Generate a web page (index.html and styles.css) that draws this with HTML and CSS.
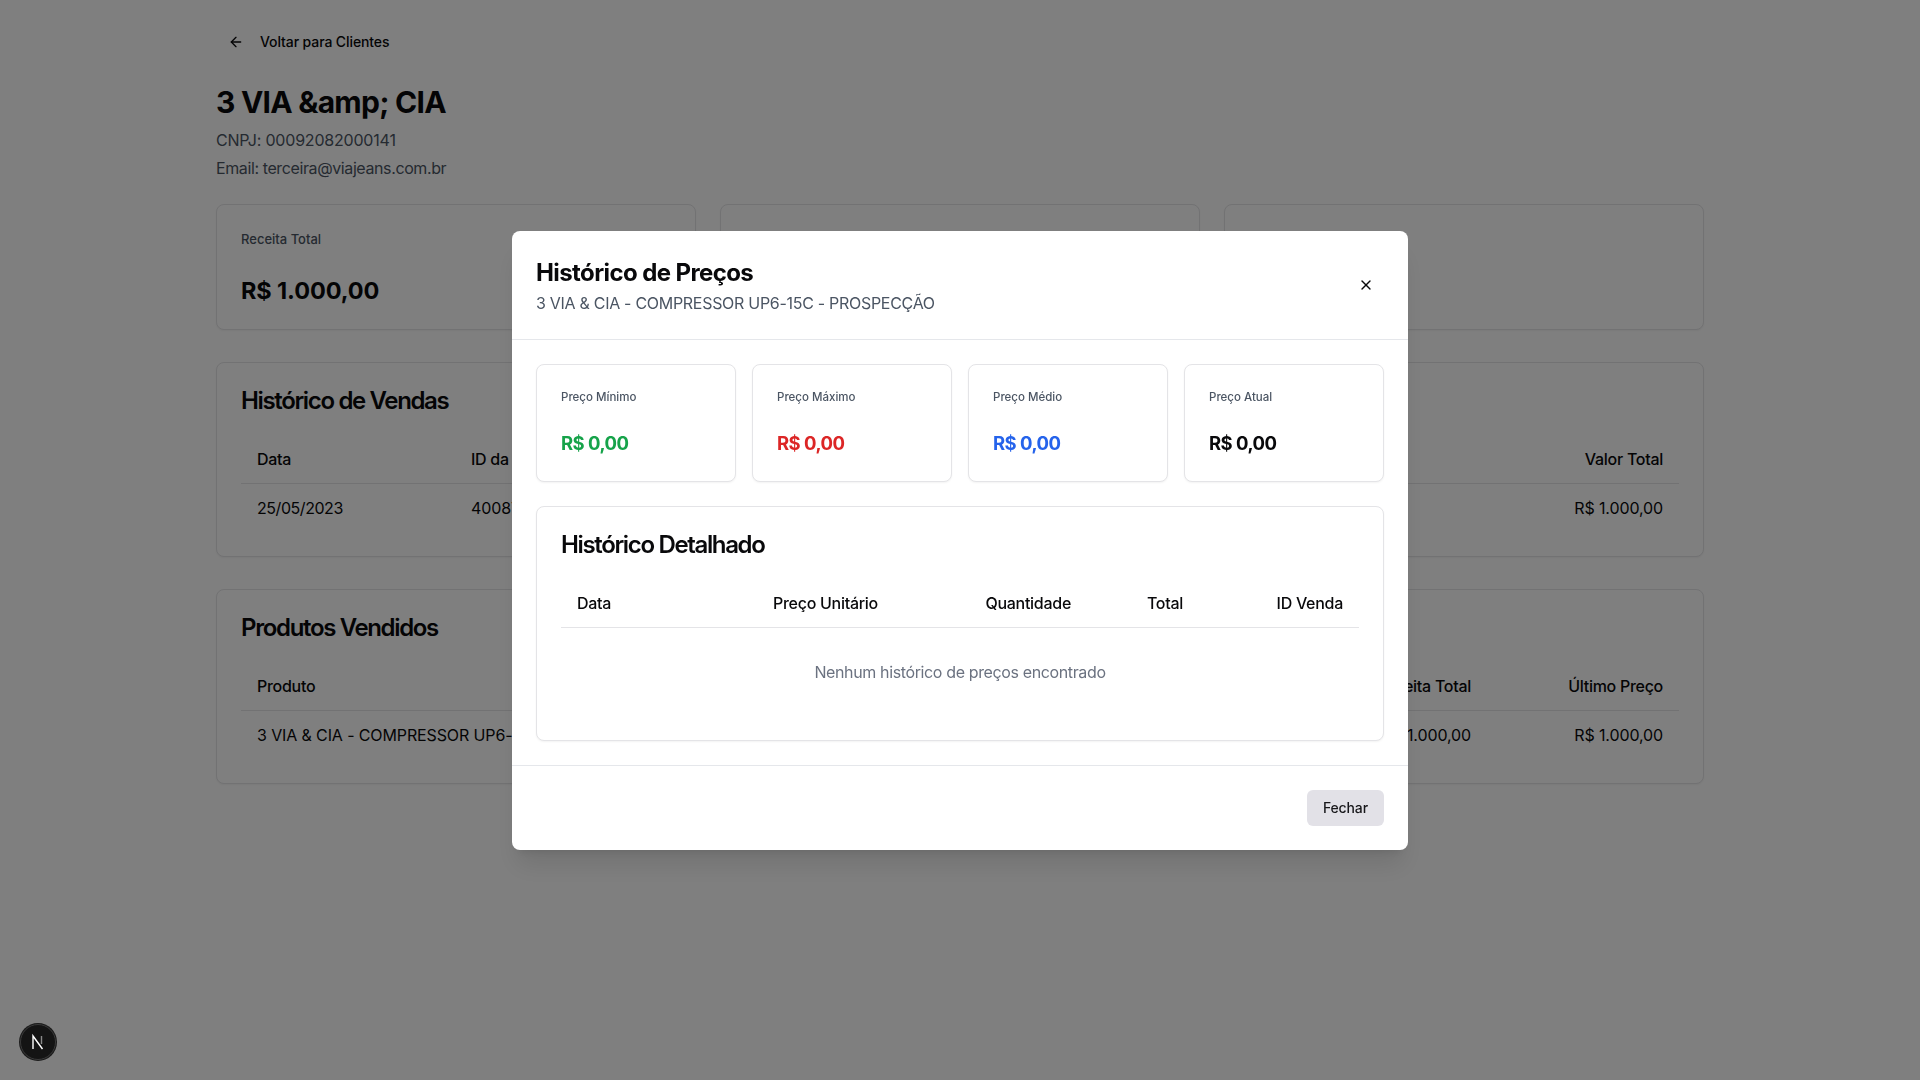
FILE: index.html
```html
<!DOCTYPE html>
<html lang="pt-BR">
<head>
    <meta charset="UTF-8">
    <meta name="viewport" content="width=device-width, initial-scale=1.0">
    <title>3 VIA &amp; CIA</title>
    <link rel="stylesheet" href="styles.css">
</head>
<body>
    <main class="container">
        <a class="back-link" href="#">
            <svg class="icon" viewBox="0 0 24 24"><path d="m12 19-7-7 7-7"/><path d="M19 12H5"/></svg>
            Voltar para Clientes
        </a>

        <header class="client-header">
            <h1>3 VIA &amp;amp; CIA</h1>
            <p class="cnpj">CNPJ: 00092082000141</p>
            <p>Email: terceira@viajeans.com.br</p>
        </header>

        <section class="stats">
            <div class="card stat">
                <div class="stat-label">Receita Total</div>
                <div class="stat-value">R$ 1.000,00</div>
            </div>
            <div class="card stat"></div>
            <div class="card stat"></div>
        </section>

        <section class="card panel">
            <h2>Histórico de Vendas</h2>
            <table>
                <thead>
                    <tr>
                        <th class="col-date">Data</th>
                        <th>ID da Venda</th>
                        <th class="right col-total">Valor Total</th>
                    </tr>
                </thead>
                <tbody>
                    <tr>
                        <td class="date">25/05/2023</td>
                        <td>400871</td>
                        <td class="right">R$ 1.000,00</td>
                    </tr>
                </tbody>
            </table>
        </section>

        <section class="card panel">
            <h2>Produtos Vendidos</h2>
            <table>
                <thead>
                    <tr>
                        <th>Produto</th>
                        <th class="right col-revenue">Receita Total</th>
                        <th class="right col-last">Último Preço</th>
                    </tr>
                </thead>
                <tbody>
                    <tr>
                        <td>3 VIA &amp; CIA - COMPRESSOR UP6-15C - PROSPECÇÃO</td>
                        <td class="right">R$ 1.000,00</td>
                        <td class="right">R$ 1.000,00</td>
                    </tr>
                </tbody>
            </table>
        </section>
    </main>

    <div class="overlay">
        <div class="modal">
            <div class="modal-header">
                <div>
                    <h2 class="modal-title">Histórico de Preços</h2>
                    <p class="modal-subtitle">3 VIA &amp; CIA - COMPRESSOR UP6-15C - PROSPECÇÃO</p>
                </div>
                <button class="close-btn" aria-label="Fechar">
                    <svg class="icon" viewBox="0 0 24 24"><path d="M18 6 6 18"/><path d="m6 6 12 12"/></svg>
                </button>
            </div>

            <div class="modal-body">
                <div class="price-grid">
                    <div class="card price-card">
                        <div class="price-label">Preço Mínimo</div>
                        <div class="price-value green">R$ 0,00</div>
                    </div>
                    <div class="card price-card">
                        <div class="price-label">Preço Máximo</div>
                        <div class="price-value red">R$ 0,00</div>
                    </div>
                    <div class="card price-card">
                        <div class="price-label">Preço Médio</div>
                        <div class="price-value blue">R$ 0,00</div>
                    </div>
                    <div class="card price-card">
                        <div class="price-label">Preço Atual</div>
                        <div class="price-value">R$ 0,00</div>
                    </div>
                </div>

                <div class="card panel detail">
                    <h2>Histórico Detalhado</h2>
                    <table>
                        <thead>
                            <tr>
                                <th class="col-d1">Data</th>
                                <th class="col-d2">Preço Unitário</th>
                                <th class="right col-d3">Quantidade</th>
                                <th class="right col-d4">Total</th>
                                <th class="right">ID Venda</th>
                            </tr>
                        </thead>
                    </table>
                    <p class="empty">Nenhum histórico de preços encontrado</p>
                </div>
            </div>

            <div class="modal-footer">
                <button class="btn-secondary">Fechar</button>
            </div>
        </div>
    </div>

    <button class="dev-badge" aria-label="Next.js">
        <svg viewBox="0 0 20 20">
            <path d="M5 17V4L14.5 17"/>
            <path class="fade" d="M13.5 4v8"/>
        </svg>
    </button>
</body>
</html>
```

FILE: styles.css
```css
* {
    box-sizing: border-box;
}

body {
    margin: 0;
    font-family: Inter, "Liberation Sans", sans-serif;
    background-color: white;
    color: #09090b;
}

h1, h2, p {
    margin: 0;
}

.icon {
    width: 16px;
    height: 16px;
    fill: none;
    stroke: currentColor;
    stroke-width: 2;
    stroke-linecap: round;
    stroke-linejoin: round;
}

.container {
    width: 1536px;
    margin: 0 auto;
    padding: 24px;
}

.back-link {
    display: inline-flex;
    align-items: center;
    gap: 16px;
    height: 35px;
    padding: 0 12px;
    font-size: 14px;
    font-weight: 500;
    letter-spacing: -0.1px;
    color: inherit;
    text-decoration: none;
}

.client-header {
    margin-top: 25px;
    margin-bottom: 24px;
}

.client-header h1 {
    font-size: 30px;
    line-height: 36px;
    font-weight: 700;
    letter-spacing: -0.75px;
    margin-bottom: 8px;
}

.client-header p {
    font-size: 16px;
    line-height: 24px;
    color: #4b5563;
    letter-spacing: -0.39px;
    margin-bottom: 4px;
}

.client-header .cnpj {
    letter-spacing: -0.2px;
}

.card {
    background-color: white;
    border: 1px solid #e4e4e7;
    border-radius: 8px;
    box-shadow: 0 1px 2px rgba(0,0,0,0.05);
}

.stats {
    display: grid;
    grid-template-columns: repeat(3, 1fr);
    gap: 24px;
    margin-bottom: 32px;
}

.stat {
    padding: 24px;
    height: 126px;
}

.stat-label {
    font-size: 13px;
    line-height: 20px;
    font-weight: 500;
    color: #4b5563;
    margin-bottom: 26px;
}

.stat-value {
    font-size: 23.5px;
    line-height: 32px;
    font-weight: 700;
    letter-spacing: -0.1px;
}

.panel {
    padding: 24px;
    margin-bottom: 32px;
}

.panel h2 {
    font-size: 24px;
    line-height: 28px;
    font-weight: 600;
    letter-spacing: -1.35px;
    margin-bottom: 20px;
}

table {
    width: 100%;
    border-collapse: collapse;
    table-layout: fixed;
    font-size: 16px;
}

th {
    height: 48px;
    padding: 0 16px;
    font-weight: 500;
    letter-spacing: -0.28px;
    text-align: left;
    border-bottom: 1px solid #e4e4e7;
}

td {
    height: 49px;
    padding: 0 16px;
    letter-spacing: -0.12px;
    white-space: nowrap;
}

td.date {
    letter-spacing: -0.45px;
}

.right {
    text-align: right;
}

.col-date { width: 214px; }
.col-total { width: 300px; }
.col-revenue { width: 200px; }
.col-last { width: 192px; }

.overlay {
    position: fixed;
    inset: 0;
    padding-top: 1px;
    background-color: rgba(0,0,0,0.5);
    display: flex;
    justify-content: center;
    align-items: center;
}

.modal {
    width: 896px;
    background-color: white;
    border-radius: 8px;
    box-shadow: 0 20px 25px -5px rgba(0,0,0,0.1), 0 8px 10px -6px rgba(0,0,0,0.1);
}

.modal-header {
    display: flex;
    justify-content: space-between;
    align-items: center;
    padding: 24px;
    border-bottom: 1px solid #e5e7eb;
}

.modal-title {
    font-size: 24px;
    line-height: 32px;
    font-weight: 700;
    letter-spacing: -0.6px;
    margin-top: 2px;
}

.modal-subtitle {
    font-size: 16px;
    line-height: 24px;
    color: #4b5563;
    letter-spacing: -0.29px;
    margin-top: 2px;
}

.close-btn {
    width: 36px;
    height: 36px;
    display: flex;
    align-items: center;
    justify-content: center;
    border: none;
    background: none;
    color: inherit;
    padding: 0;
}

.modal-body {
    padding: 24px;
}

.price-grid {
    display: grid;
    grid-template-columns: repeat(4, 1fr);
    gap: 16px;
    margin-bottom: 24px;
}

.price-card {
    padding: 24px;
}

.price-label {
    font-size: 11.5px;
    line-height: 16px;
    font-weight: 500;
    color: #4b5563;
    margin-bottom: 24px;
}

.price-value {
    font-size: 18.5px;
    line-height: 28px;
    font-weight: 700;
    letter-spacing: -0.55px;
}

.green { color: #16a34a; }
.red { color: #dc2626; }
.blue { color: #2563eb; }

.detail {
    margin-bottom: 0;
}

.detail h2 {
    margin-bottom: 19px;
}

.detail th {
    height: 49px;
}

.col-d1 { width: 196px; }
.col-d2 { width: 137px; padding-right: 0; }
.col-d3 { width: 193px; }
.col-d4 { width: 112px; }

.empty {
    padding: 32px 0 32px;
    text-align: center;
    color: #6b7280;
    line-height: 24px;
    letter-spacing: -0.37px;
}

.modal-footer {
    display: flex;
    justify-content: flex-end;
    padding: 24px;
    border-top: 1px solid #e5e7eb;
}

.btn-secondary {
    height: 36px;
    padding: 0 16px;
    border: none;
    border-radius: 6px;
    background-color: #e2e1e7;
    color: #18181b;
    font-family: inherit;
    font-size: 14px;
    font-weight: 500;
    letter-spacing: -0.12px;
}

/* indicador do Next em modo dev */
.dev-badge {
    position: fixed;
    left: 20px;
    bottom: 20px;
    width: 36px;
    height: 36px;
    padding: 0;
    display: flex;
    align-items: center;
    justify-content: center;
    border-radius: 50%;
    border: 1px solid #3a3a3a;
    background-color: #141414;
    box-shadow: 0 0 0 1px #1a1a1a;
}

.dev-badge svg {
    width: 20px;
    height: 20px;
    fill: none;
    stroke: white;
    stroke-width: 1.4;
}

.dev-badge .fade {
    opacity: 0.5;
}
```
